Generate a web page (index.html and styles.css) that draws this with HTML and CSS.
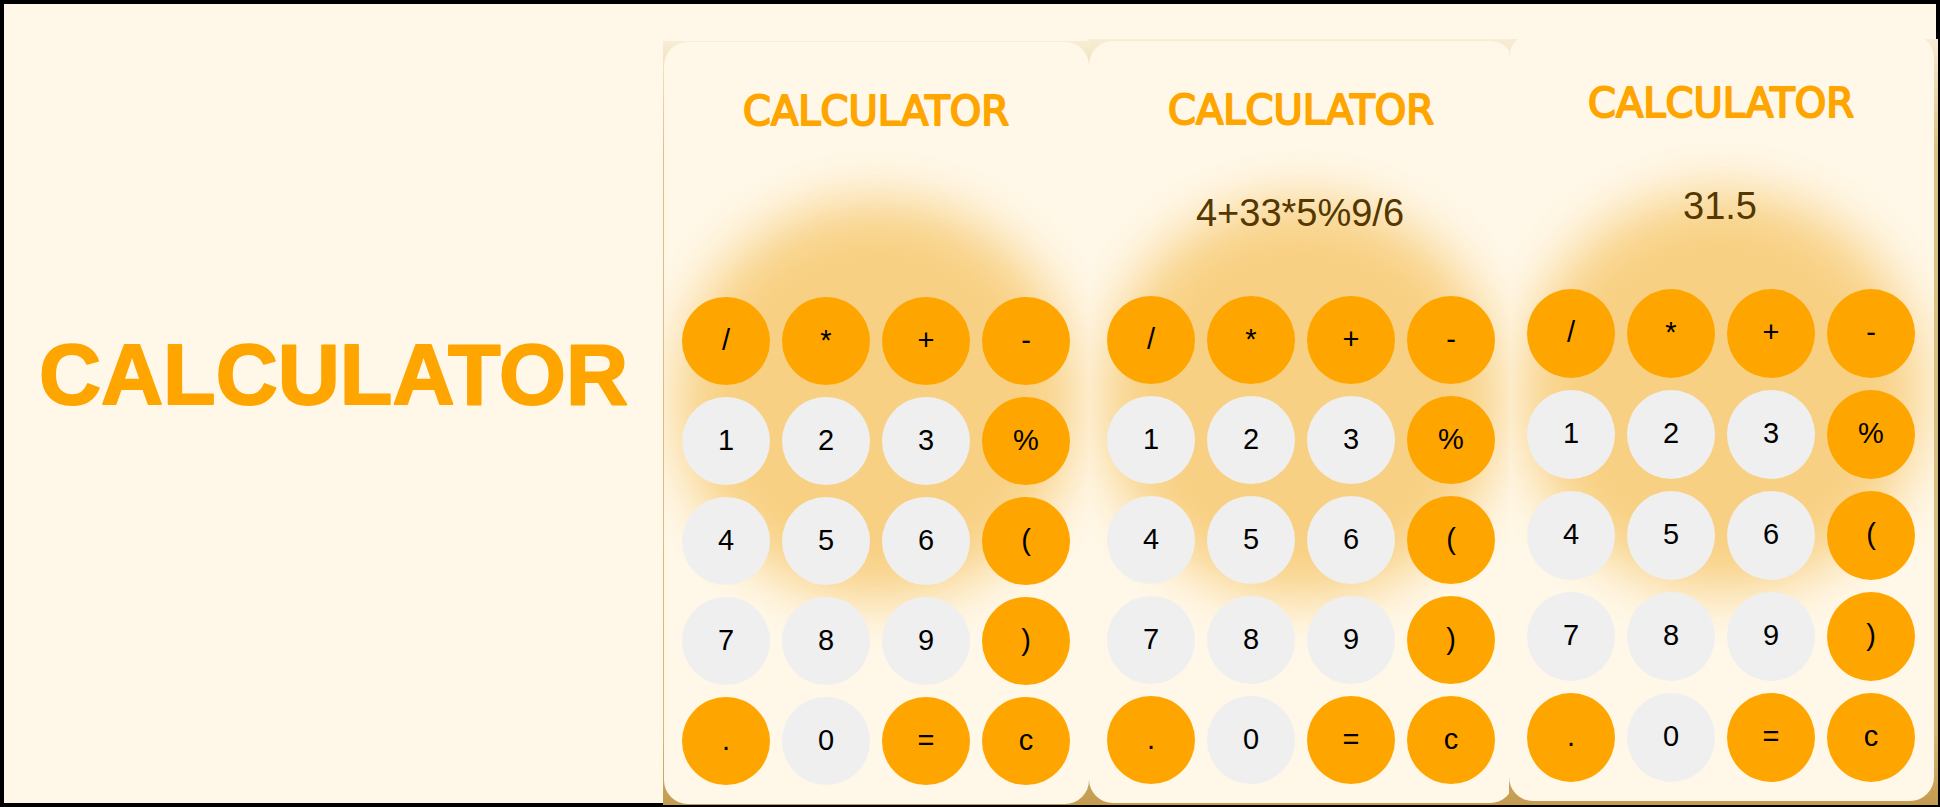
FILE: index.html
```html
<!DOCTYPE html>
<html lang="en">
<head>
<meta charset="utf-8">
<title>Calculator</title>
<link rel="stylesheet" href="styles.css">
</head>
<body>
<main class="stage">
  <header class="brand">
    <h1 class="brand-title"><svg class="brand-art"><text class="brand-text" x="50%" y="83" text-anchor="middle">CALCULATOR</text></svg></h1>
  </header>

  <section class="panel panel-first">
    <form class="card">
      <h2 class="title"><svg class="title-art"><text class="title-text" x="50%" y="47" text-anchor="middle">CALCULATOR</text></svg></h2>
      <input class="display" type="text" aria-label="Result" value="" readonly>
      <div class="keys">
        <button class="key op" type="button">/</button><button class="key op" type="button">*</button><button class="key op" type="button">+</button><button class="key op" type="button">-</button>
        <button class="key" type="button">1</button><button class="key" type="button">2</button><button class="key" type="button">3</button><button class="key op" type="button">%</button>
        <button class="key" type="button">4</button><button class="key" type="button">5</button><button class="key" type="button">6</button><button class="key op" type="button">(</button>
        <button class="key" type="button">7</button><button class="key" type="button">8</button><button class="key" type="button">9</button><button class="key op" type="button">)</button>
        <button class="key op" type="button">.</button><button class="key" type="button">0</button><button class="key op" type="button">=</button><button class="key op" type="button">c</button>
      </div>
    </form>
  </section>

  <section class="panel panel-second">
    <form class="card">
      <h2 class="title"><svg class="title-art"><text class="title-text" x="50%" y="47" text-anchor="middle">CALCULATOR</text></svg></h2>
      <input class="display" type="text" aria-label="Result" value="4+33*5%9/6" readonly>
      <div class="keys">
        <button class="key op" type="button">/</button><button class="key op" type="button">*</button><button class="key op" type="button">+</button><button class="key op" type="button">-</button>
        <button class="key" type="button">1</button><button class="key" type="button">2</button><button class="key" type="button">3</button><button class="key op" type="button">%</button>
        <button class="key" type="button">4</button><button class="key" type="button">5</button><button class="key" type="button">6</button><button class="key op" type="button">(</button>
        <button class="key" type="button">7</button><button class="key" type="button">8</button><button class="key" type="button">9</button><button class="key op" type="button">)</button>
        <button class="key op" type="button">.</button><button class="key" type="button">0</button><button class="key op" type="button">=</button><button class="key op" type="button">c</button>
      </div>
    </form>
  </section>

  <section class="panel panel-third">
    <form class="card">
      <h2 class="title"><svg class="title-art"><text class="title-text" x="50%" y="47" text-anchor="middle">CALCULATOR</text></svg></h2>
      <input class="display" type="text" aria-label="Result" value="31.5" readonly>
      <div class="keys">
        <button class="key op" type="button">/</button><button class="key op" type="button">*</button><button class="key op" type="button">+</button><button class="key op" type="button">-</button>
        <button class="key" type="button">1</button><button class="key" type="button">2</button><button class="key" type="button">3</button><button class="key op" type="button">%</button>
        <button class="key" type="button">4</button><button class="key" type="button">5</button><button class="key" type="button">6</button><button class="key op" type="button">(</button>
        <button class="key" type="button">7</button><button class="key" type="button">8</button><button class="key" type="button">9</button><button class="key op" type="button">)</button>
        <button class="key op" type="button">.</button><button class="key" type="button">0</button><button class="key op" type="button">=</button><button class="key op" type="button">c</button>
      </div>
    </form>
  </section>
</main>
</body>
</html>
```

FILE: styles.css
```css
* {
  box-sizing: border-box;
}

body {
  margin: 0;
  padding: 4px;
  background: #000;
  font-family: "Liberation Sans", Arial, sans-serif;
}

.stage {
  display: flex;
  background: #fff8e9;
}

.brand {
  flex: 1;
  display: flex;
  align-items: center;
  padding-bottom: 62px;
}

.brand-title,
.title {
  width: 100%;
  margin: 0;
}

.brand-art,
.title-art {
  display: block;
  width: 100%;
  overflow: visible;
}

.brand-art {
  height: 104px;
}

.brand-text {
  font: 700 86px "Liberation Sans", Arial, sans-serif;
  fill: #ffa500;
  stroke: #ffa500;
  stroke-width: 2px;
  stroke-linejoin: round;
}

.panel {
  overflow: hidden;
  margin-bottom: -2px;
  background: linear-gradient(#f8edd5, #f0dfbc 30px, #dcc085 110px, #d6b87a 90%, #c49b4f);
}

.panel-first {
  margin-top: 37px;
  padding: 1px 0 1px 1px;
}

.panel-second {
  margin-top: 35px;
  padding: 2px 0;
}

/* The last panel laps over the edge of its neighbour. */
.panel-third {
  z-index: 1;
  margin: 35px -2px -2px -5px;
  padding: 0 4px 4px 0;
}

.panel-third .card {
  margin-top: -5px;
}

.card {
  position: relative;
  isolation: isolate;
  overflow: hidden;
  padding: 36px 19px 19px 18px;
  border-radius: 24px;
  background: #fff8e9;
}

.card::before {
  content: "";
  position: absolute;
  z-index: -1;
  top: 158px;
  left: 50%;
  width: 400px;
  height: 400px;
  margin-left: -200px;
  border-radius: 50%;
  background: #f8d083;
  filter: blur(27px);
}

.title-art {
  height: 60px;
}

.title-text {
  font: 400 40px "DejaVu Sans", sans-serif;
  fill: #ffa500;
  stroke: #ffa500;
  stroke-width: 2px;
  stroke-linejoin: round;
}

.display {
  display: block;
  width: 0;
  min-width: 100%;
  height: 60px;
  margin: 46px 0 53px;
  padding: 0 2px 0 0;
  border: 0;
  outline: 0;
  background: transparent;
  color: #553700;
  font: 38px "Liberation Sans", Arial, sans-serif;
  text-align: center;
}

.keys {
  display: grid;
  grid-template-columns: repeat(4, 88px);
  grid-auto-rows: 88px;
  gap: 12px;
}

.panel-third .keys {
  grid-auto-rows: 89px;
}

.key {
  padding: 0 0 2px;
  border: 0;
  border-radius: 50%;
  background: #efefef;
  color: #000;
  font: 29px "Liberation Sans", Arial, sans-serif;
}

.op {
  background: #ffa500;
}
```
